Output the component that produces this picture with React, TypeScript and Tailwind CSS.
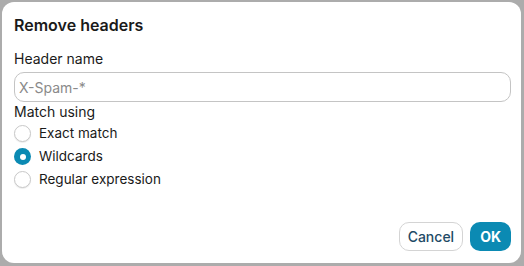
import { useState } from "react";

const options = ["Exact match", "Wildcards", "Regular expression"];

export default function App() {
  const [selected, setSelected] = useState("Wildcards");

  return (
    <div className="w-[524px] h-[266px] bg-[#acacac] p-[2px] pr-[3px] pb-[3px] font-['Inter',sans-serif]">
      <div className="h-full bg-white rounded-[12px] flex flex-col pl-[12px] pr-[10px] pt-[13px] pb-[12px] text-[#1a1a1a]">
        <h1 className="text-[16px] font-semibold leading-[20px]">Remove headers</h1>

        <label className="mt-[15px] text-[14px] leading-[18px]">Header name</label>
        <input
          type="text"
          placeholder="X-Spam-*"
          className="mt-[4px] h-[30px] w-full rounded-[10px] border border-[#c4c4c4] px-[4px] text-[14px] placeholder:text-[#8a8a8a] outline-none"
        />

        <div className="mt-[1px] text-[14px] leading-[18px]">Match using</div>
        <div className="mt-[4px] flex flex-col gap-[6px]">
          {options.map((opt) => (
            <label
              key={opt}
              className="flex items-center gap-[8px] text-[13.5px] leading-[17px] cursor-pointer"
              onClick={() => setSelected(opt)}
            >
              {selected === opt ? (
                <span className="w-[17px] h-[17px] rounded-full bg-[#0b8ab3] flex items-center justify-center">
                  <span className="w-[6px] h-[6px] rounded-full bg-white" />
                </span>
              ) : (
                <span className="w-[17px] h-[17px] rounded-full border border-[#c8c8c8] bg-white shadow-[0_1px_1px_rgba(0,0,0,0.08)]" />
              )}
              {opt}
            </label>
          ))}
        </div>

        <div className="mt-auto flex justify-end gap-[7px]">
          <button className="h-[29px] px-[8px] rounded-[10px] border border-[#d4d4d4] bg-white text-[14px] font-medium text-[#1e4a66]">
            Cancel
          </button>
          <button className="h-[29px] px-[10px] rounded-[10px] bg-[#0b8ab3] text-[14px] font-bold text-white">
            OK
          </button>
        </div>
      </div>
    </div>
  );
}
